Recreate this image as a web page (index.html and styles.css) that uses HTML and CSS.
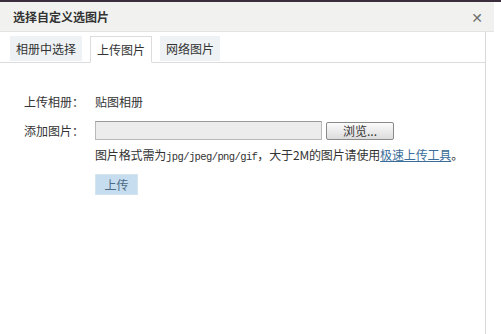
FILE: index.html
```html
<!DOCTYPE html>
<html lang="zh">
<head>
<meta charset="utf-8">
<link rel="stylesheet" href="styles.css">
</head>
<body>
<div class="topline"></div>
<div class="dialog">
  <div class="titlebar">
    <span class="title">选择自定义选图片</span>
    <span class="close">✕</span>
  </div>
  <div class="tabs">
    <span class="tab">相册中选择</span>
    <span class="tab active">上传图片</span>
    <span class="tab">网络图片</span>
  </div>
  <div class="body">
    <div class="row r1">
      <span class="label">上传相册：</span>
      <span class="value">贴图相册</span>
    </div>
    <div class="row r2">
      <span class="label">添加图片：</span>
      <div class="file">
        <span class="input"></span>
        <span class="browse">浏览...</span>
      </div>
    </div>
    <div class="hint">图片格式需为<span class="mono">jpg/jpeg/png/gif</span>，大于2M的图片请使用<a class="link">极速上传工具</a>。</div>
    <div class="submit"><span class="btn">上传</span></div>
  </div>
</div>
</body>
</html>
```

FILE: styles.css
```css
html, body { margin: 0; padding: 0; background: #fff; }
body {
  width: 501px; height: 334px; overflow: hidden;
  font-family: "Noto Sans CJK SC", "DejaVu Sans", sans-serif;
  font-size: 12px; color: #333;
}
.topline { height: 2px; background: #3b2d3c; }
.dialog { width: 486px; border-right: 1px solid #d9d9d9; height: 332px; box-sizing: border-box; }
.titlebar {
  height: 30px; background: #f1f2ef; border-bottom: 1px solid #e2e4e0;
  display: flex; align-items: center; justify-content: space-between;
  padding: 0 11px 0 13px; width: 494px; box-sizing: border-box;
}
.title { font-weight: bold; font-size: 12px; color: #333; }
.close { font-size: 14px; color: #6f6f6f; font-weight: bold; }
.tabs {
  display: flex; gap: 8px; padding: 4px 0 0 10px; height: 26px;
  border-bottom: 1px solid #dcdcdc;
}
.tab {
  height: 25px; line-height: 25px; padding: 0 6px; background: #eef2f4;
  font-size: 12px; color: #333;
}
.tab.active { background: #fff; border: 1px solid #dcdcdc; border-bottom: 1px solid #fff; height: 25px; margin-bottom: -1px; }
.body { padding: 30px 0 0 24px; }
.row { display: flex; align-items: center; }
.label { width: 71px; }
.r2 { margin-top: 11px; }
.file { display: flex; align-items: center; gap: 4px; }
.input {
  width: 225px; height: 17px; border: 1px solid #b9b9b9; border-top-color: #999;
  background: #ececec;
}
.browse {
  width: 66px; height: 16px; line-height: 16px; text-align: center;
  border: 1px solid #8a8a8a; border-radius: 2px;
  background: linear-gradient(#fbfbfb, #dcdcdc); font-size: 12px;
}
.hint { margin: 6px 0 0 71px; font-size: 12px; letter-spacing: -0.15px; }
.mono { font-family: "Liberation Mono", monospace; font-size: 10.5px; letter-spacing: -0.6px; }
.link { color: #3a6d99; text-decoration: underline; }
.submit { margin: 11px 0 0 71px; }
.btn {
  display: inline-block; width: 41px; height: 19px; line-height: 19px; text-align: center;
  background: #c6ddef; color: #4a6a85; border: 1px solid #d6e4ee;
}
```
